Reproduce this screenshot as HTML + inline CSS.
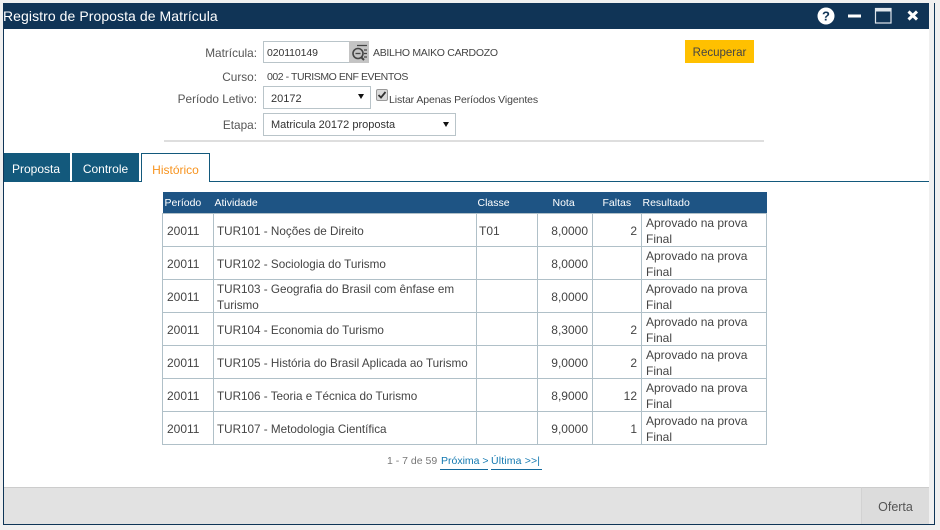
<!DOCTYPE html>
<html lang="pt">
<head>
<meta charset="utf-8">
<title>Registro de Proposta de Matrícula</title>
<style>
html,body{margin:0;padding:0;width:940px;height:530px;overflow:hidden;background:#f0f0f0;font-family:"Liberation Sans",sans-serif;font-size:12px;color:#444}
.a{position:absolute;white-space:nowrap}
#win{position:absolute;left:3px;top:3px;width:930px;height:521px;border:1px solid #0f3557;border-top:0;background:#f0f0f0}
#content{position:absolute;left:3px;top:29px;width:926px;height:458px;background:#fff;border-left:1px solid #0f3557;box-sizing:border-box}
#title{position:absolute;left:3px;top:3px;width:926px;height:26px;background:#103456;color:#fff;font-size:14px;line-height:26px}
#foot{position:absolute;left:4px;top:487px;width:925px;height:37px;background:#e2e2e2;border-top:1px solid #ccc;box-sizing:border-box}
#oferta{position:absolute;left:861px;top:487px;width:68px;height:37px;background:#dcdcdc;border-top:1px solid #ccc;border-left:1px solid #d2d2d2;box-sizing:border-box;text-align:center;line-height:39px;color:#555;font-size:12.5px}
.lab{text-align:right;width:120px;left:137px;color:#555;font-size:11.8px}
.box{position:absolute;background:#fff;border:1px solid #b9c4c9;box-sizing:border-box;color:#333;line-height:23px;font-size:11px}
.arr{position:absolute;width:0;height:0;border-left:3px solid transparent;border-right:3px solid transparent;border-top:5px solid #111}
.tab{position:absolute;top:153px;height:28px;background:#13597c;color:#fff;text-align:center;line-height:33px;font-size:12px}
table{position:absolute;left:162px;top:192px;width:604px;border-collapse:collapse;table-layout:fixed;font-size:12px}
th{background:#1e5484;color:#fff;font-weight:normal;text-align:left;height:21px;padding:2px 0 0 1px;box-sizing:border-box;font-size:10.5px;border:0}
td{border:1px solid #b0c0c8;height:33px;padding:0 4px;box-sizing:border-box;color:#444;line-height:16px}
td div{position:relative;top:1px}
td.t{font-size:11.7px;padding-left:3px;padding-right:2px}
td.t div{top:2px}
td.c{padding-left:2px}
td.f{padding-left:4px;padding-right:0;overflow:hidden}
td.r{text-align:right}
a{color:#1278b0;text-decoration:none}
</style>
</head>
<body>
<div id="win"></div>
<div id="content"></div>
<div id="title"><span style="position:absolute;left:0;top:0;letter-spacing:.07px">Registro de Proposta de Matrícula</span>
<svg style="position:absolute;left:810px;top:0" width="116" height="26" viewBox="0 0 116 26">
<circle cx="13" cy="13" r="8.500" fill="#fff"/>
<text x="13" y="17.500" font-family="Liberation Sans" font-weight="bold" font-size="13" text-anchor="middle" fill="#103456">?</text>
<rect x="35" y="11.500" width="13" height="3" fill="#fff"/>
<rect x="62.500" y="5.500" width="15.500" height="14.500" fill="none" stroke="#dfe6ec" stroke-width="1.200"/>
<rect x="62.500" y="5.500" width="15.500" height="3" fill="#dfe6ec"/>
<path d="M95.500 8.500l8.500 8M104 8.500l-8.500 8" stroke="#fff" stroke-width="3"/>
</svg>
</div>

<div class="a lab" style="top:46px">Matrícula:</div>
<div class="box" style="left:263px;top:41px;width:87px;height:22px;padding-left:3px;font-size:10.500px;letter-spacing:-.1px;line-height:23px">020110149</div>
<div class="a" style="left:349px;top:41px;width:20px;height:22px;background:#c4c4c4"></div>
<svg class="a" style="left:349px;top:41px" width="20" height="22" viewBox="0 0 20 22">
<path d="M8 4.500h10M15 9h3M15 12.500h3M15 16h3" stroke="#444" stroke-width="1.300" fill="none"/>
<circle cx="9" cy="12.500" r="5" fill="none" stroke="#444" stroke-width="1.600"/>
<path d="M6.500 12.500h5" stroke="#444" stroke-width="1.300"/>
<path d="M12.500 16.500l2.500 2.500" stroke="#444" stroke-width="2"/>
</svg>
<div class="a" style="left:373px;top:47px;font-size:10.500px;letter-spacing:-.3px;color:#444">ABILHO MAIKO CARDOZO</div>
<div class="a" style="left:685px;top:40px;width:69px;height:23px;background:#ffc000;color:#444;text-align:center;line-height:26px;font-size:11.500px">Recuperar</div>

<div class="a lab" style="top:70px">Curso:</div>
<div class="a" style="left:267px;top:71px;font-size:10.500px;letter-spacing:-.44px;color:#444">002 - TURISMO ENF EVENTOS</div>

<div class="a lab" style="top:92px">Período Letivo:</div>
<div class="box" style="left:263px;top:86px;width:108px;height:23px;padding-left:7px;line-height:25px"><span>20172</span><span class="arr" style="left:94px;top:7px"></span></div>
<svg class="a" style="left:376px;top:89px" width="12" height="12" viewBox="0 0 12 12">
<rect x=".5" y=".5" width="11" height="11" rx="1.500" fill="#dcdcdc" stroke="#9a9a9a"/>
<path d="M2.500 6l2.500 2.500L9.500 3" fill="none" stroke="#333" stroke-width="1.800"/>
</svg>
<div class="a" style="left:389px;top:94px;font-size:10.500px;letter-spacing:-.1px;color:#444">Listar Apenas Períodos Vigentes</div>

<div class="a lab" style="top:118px">Etapa:</div>
<div class="box" style="left:263px;top:113px;width:193px;height:23px;padding-left:7px"><span>Matricula 20172 proposta</span><span class="arr" style="left:179px;top:8px"></span></div>

<div class="a" style="left:164px;top:140px;width:600px;height:2px;background:#dedede"></div>

<div class="a" style="left:4px;top:181px;width:925px;height:1px;background:#13597c"></div>
<div class="tab" style="left:4px;width:64px;padding-right:2px">Proposta</div>
<div class="tab" style="left:72px;width:67px">Controle</div>
<div class="tab" style="left:141px;top:153px;width:69px;height:29px;background:#fff;color:#f7931e;border:1px solid #13597c;border-bottom:0;box-sizing:border-box;line-height:32px">Histórico</div>

<table>
<colgroup><col style="width:51px"><col style="width:263px"><col style="width:61px"><col style="width:55px"><col style="width:49px"><col style="width:125px"></colgroup>
<tr><th style="padding-left:2px">Período</th><th>Atividade</th><th>Classe</th><th style="padding-left:15px">Nota</th><th style="padding-left:10px">Faltas</th><th>Resultado</th></tr>
<tr><td><div>20011</div></td><td class="t"><div>TUR101 - Noções de Direito</div></td><td class="c"><div>T01</div></td><td class="r"><div>8,0000</div></td><td class="r"><div>2</div></td><td class="f"><div>Aprovado na prova Final</div></td></tr>
<tr><td><div>20011</div></td><td class="t"><div>TUR102 - Sociologia do Turismo</div></td><td></td><td class="r"><div>8,0000</div></td><td class="r"></td><td class="f"><div>Aprovado na prova Final</div></td></tr>
<tr><td><div>20011</div></td><td class="t"><div>TUR103 - Geografia do Brasil com ênfase em Turismo</div></td><td></td><td class="r"><div>8,0000</div></td><td class="r"></td><td class="f"><div>Aprovado na prova Final</div></td></tr>
<tr><td><div>20011</div></td><td class="t"><div>TUR104 - Economia do Turismo</div></td><td></td><td class="r"><div>8,3000</div></td><td class="r"><div>2</div></td><td class="f"><div>Aprovado na prova Final</div></td></tr>
<tr><td><div>20011</div></td><td class="t" style="white-space:nowrap"><div>TUR105 - História do Brasil Aplicada ao Turismo</div></td><td></td><td class="r"><div>9,0000</div></td><td class="r"><div>2</div></td><td class="f"><div>Aprovado na prova Final</div></td></tr>
<tr><td><div>20011</div></td><td class="t"><div>TUR106 - Teoria e Técnica do Turismo</div></td><td></td><td class="r"><div>8,9000</div></td><td class="r"><div>12</div></td><td class="f"><div>Aprovado na prova Final</div></td></tr>
<tr><td><div>20011</div></td><td class="t"><div>TUR107 - Metodologia Científica</div></td><td></td><td class="r"><div>9,0000</div></td><td class="r"><div>1</div></td><td class="f"><div>Aprovado na prova Final</div></td></tr>
</table>

<div class="a" style="left:387px;top:455px;font-size:10.500px;color:#777">1 - 7 de 59</div>
<a class="a" style="left:440px;top:455px;width:47px;height:14px;padding-left:1px;font-size:10.500px;border-bottom:1px solid #13699c">Próxima &gt;</a>
<a class="a" style="left:491px;top:455px;width:51px;height:14px;font-size:10.500px;letter-spacing:.15px;border-bottom:1px solid #13699c">Última &gt;&gt;|</a>

<div id="foot"></div>
<div id="oferta">Oferta</div>
</body>
</html>
